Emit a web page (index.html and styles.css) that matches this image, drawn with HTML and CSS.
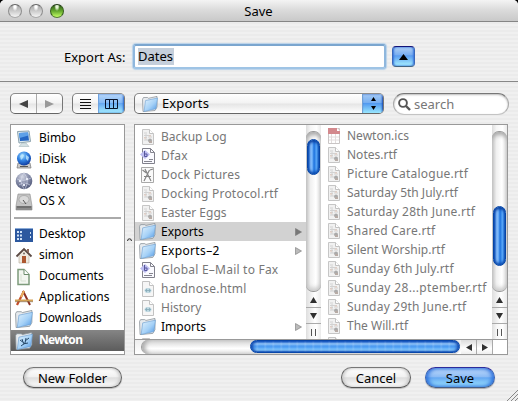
FILE: index.html
```html
<!DOCTYPE html>
<html lang="en">
<head>
<meta charset="utf-8">
<title>Save</title>
<link rel="stylesheet" href="styles.css">
</head>
<body>
<svg width="0" height="0" class="defs" aria-hidden="true">
  <defs>
    <linearGradient id="gBlue" x1="0" y1="0" x2="1" y2="1"><stop offset="0" stop-color="#e4f3fd"/><stop offset=".55" stop-color="#a5d1f7"/><stop offset="1" stop-color="#4d96e4"/></linearGradient>
    <radialGradient id="gGlobe" cx=".4" cy=".3" r=".75"><stop offset="0" stop-color="#9ddcff"/><stop offset=".5" stop-color="#2f7fe0"/><stop offset="1" stop-color="#0b3498"/></radialGradient>
    <radialGradient id="gNet" cx=".4" cy=".25" r=".8"><stop offset="0" stop-color="#d5d9e5"/><stop offset=".5" stop-color="#858ca8"/><stop offset="1" stop-color="#4c5475"/></radialGradient>
    <symbol id="folder" viewBox="0 0 16 16"><path d="M.5 3.2 1.500 1.500h4l1 .8L15 .4V11l-2 3.500L1 15.600z" fill="#e6eaee" stroke="#858d94" stroke-width=".7"/><path d="M3.500 4.600 15.500 2 14 12.800 2 15.500z" fill="url(#gBlue)" stroke="#6d9fd2" stroke-width=".6"/></symbol>
    <symbol id="rtf" viewBox="0 0 14 16"><path d="M1.5.5h7l4 4v11h-11z" fill="#f1f1f1" stroke="#c6c6c6"/><path d="M8.5.5v4h4" fill="#fff" stroke="#c2c2c2"/><path d="M3 4h3M3 6.5h7M3 8.5h3M5 5v6M3 11h4M7 8h4" stroke="#d2d2d2"/><path d="M3 9h2M8 7h2" stroke="#e5c9bb"/><circle cx="9" cy="11.5" r="2" fill="#aaa"/><path d="M8 12h3v2H8z" fill="#b7aba5"/></symbol>
    <symbol id="html" viewBox="0 0 14 16"><path d="M1.5.5h7l4 4v11h-11z" fill="#f6f6f6" stroke="#c2c2c2"/><path d="M8.5.5v4h4" fill="#fff" stroke="#c2c2c2"/><ellipse cx="7" cy="9.5" rx="3.5" ry="2.5" fill="#bdd8e1"/><path d="M4 9.5h6M5.5 7.8v3.4M8.5 7.8v3.4" stroke="#85a9b7" stroke-width=".8"/></symbol>
    <symbol id="bb" viewBox="0 0 16 16"><path d="M2.5.5h8l4 4v11h-12z" fill="#fafaff" stroke="#81818c"/><path d="M10.5.5v4h4M4 13.5h8M9 11.5h4" fill="none" stroke="#85858f"/><path d="M0 6.5 5 2l5 4.5L5 11z" fill="#bdbdf0"/><path d="M4.500 3v5.500h2.500V6H4.500" fill="none" stroke="#57579d"/></symbol>
    <symbol id="dock" viewBox="0 0 16 16"><path d="M1.5.5h12v15h-12z" fill="#fafafa" stroke="#a9a9a9"/><path d="M5 2l6 12M9.500 3 4 14M2.5 3l4 3M4 9.500h7M10 3l3-1" stroke="#858585" stroke-width="1.2"/></symbol>
    <symbol id="ics" viewBox="0 0 14 16"><path d="M1.5.5h11v15h-11z" fill="#fff" stroke="#c9c5c5"/><path d="M1 0h9l3 3v3H1z" fill="#d3898d"/><path d="M10 0v3h3" fill="#fff"/><path d="M2 9h10M2 12h10M4.5 6v9M8.5 6v9" stroke="#e2dcdc"/></symbol>
    <symbol id="arrow" viewBox="0 0 7 8"><path d="M.5.5 6.5 4 .5 7.5z" fill="currentColor" stroke="#777" stroke-width=".6"/></symbol>
    <symbol id="up" viewBox="0 0 7 6"><path d="M3.5 0 7 6H0z" fill="#303030"/></symbol>
    <symbol id="down" viewBox="0 0 7 6"><path d="M0 0h7L3.5 6z" fill="#303030"/></symbol>
  </defs>
</svg>
<div class="window">
  <header class="titlebar">
    <div class="lights"><i></i><i></i><i class="green"></i></div>
    <h1>Save</h1>
  </header>
  <section class="export">
    <label>Export As:</label>
    <div class="field"><span>Dates</span></div>
    <button class="disclose"><svg width="9" height="6" viewBox="0 0 9 6"><path d="M4.5 0 9 6H0z"/></svg></button>
  </section>
  <section class="toolbar">
    <div class="segment nav">
      <span><svg width="9" height="8" viewBox="0 0 9 8"><path d="M0 4 9 0v8z" fill="#444"/></svg></span>
      <span><svg width="9" height="8" viewBox="0 0 9 8"><path d="M9 4 0 0v8z" fill="#999"/></svg></span>
    </div>
    <div class="segment view">
      <span><svg width="11" height="10" viewBox="0 0 11 10"><path d="M0 .5h11M0 3.5h11M0 6.5h11M0 9.5h11" stroke="#111"/></svg></span>
      <span class="on"><svg width="13" height="10" viewBox="0 0 13 10"><path d="M.5.5h12v9H.5zM4.5 0v10M8.5 0v10" fill="none" stroke="#07132c"/></svg></span>
    </div>
    <div class="popup">
      <svg class="ico" width="16" height="16"><use href="#folder"/></svg><b>Exports</b>
      <span class="stepper"><svg width="5" height="13" viewBox="0 0 5 13"><path d="M2.5 0 5 4H0zM2.5 13 0 9h5z"/></svg></span>
    </div>
    <div class="search"><svg width="13" height="13" viewBox="0 0 13 13"><circle cx="5" cy="5" r="3.9" fill="none" stroke="#555" stroke-width="1.9"/><path d="m8 8 4 4" stroke="#555" stroke-width="2.4"/></svg><span>search</span></div>
  </section>
  <main class="panes">
    <nav class="sidebar">
      <div class="place"><svg viewBox="0 0 18 18"><path d="M2.5 1.5 14 1l1.5 10.5L4 13z" fill="#ddeaf0" stroke="#8ba2ad"/><path d="M4 3l9-.5 1 8L5 11z" fill="#2467c4"/><path d="M4 3l9-.5.5 3L4.500 8z" fill="#5ca0e8"/><path d="M7 13h4l3 3.500H4z" fill="#d4e1e4" stroke="#a7b9be" stroke-width=".6"/></svg><span>Bimbo</span></div>
      <div class="place"><svg viewBox="0 0 18 18"><path d="M3 12h12l1 5H2z" fill="#c9c9c9" stroke="#777" stroke-width=".7"/><circle cx="9" cy="7.500" r="7" fill="url(#gGlobe)"/><path d="M5 5l2-2 2 1-1 3-2 2zM11 4l3 2-1 4-2-2z" fill="#c6ecff" opacity=".75"/><path d="M5 15.500h8" stroke="#555"/></svg><span>iDisk</span></div>
      <div class="place"><svg viewBox="0 0 18 18"><circle cx="9" cy="9" r="8.300" fill="url(#gNet)"/><path d="M2 7q7 3 14-1M4 13q5-4 11 0M9 1q-6 7 0 16M9 1q6 7 1 16" fill="none" stroke="#d7dcee" stroke-width=".6"/><path d="M4 8h2v2H4zM11 6h2v2h-2zM8 12h2v2H8z" fill="#e5e9f5"/></svg><span>Network</span></div>
      <div class="place"><svg viewBox="0 0 18 18"><path d="M3 1h12l2 12v4H1v-4z" fill="#c3c3c3" stroke="#898989" stroke-width=".6"/><ellipse cx="9" cy="6.500" rx="5" ry="4" fill="#d9d9d9" stroke="#999" stroke-width=".6"/><path d="M1 13h16v4H1z" fill="#8c8c8c"/><path d="M2 14h14M8 7l3 4" stroke="#555"/></svg><span>OS X</span></div>
      <hr>
      <div class="place"><svg viewBox="0 0 18 18"><path d="M0 2h18v14H0z" fill="#2c589f"/><path d="M0 2h18v1H0z" fill="#8babd7"/><path d="M2 5h2v2H2zM5 5h2v2H5zM2 8.500h2v2H2zM5 8.500h2v2H5zM2 12h2v2H2zM5 12h2v2H5zM15 6h1v2h-1zM15 10h1v2h-1z" fill="#cee0f5"/></svg><span>Desktop</span></div>
      <div class="place"><svg viewBox="0 0 18 18"><path d="M4 8 9 3l5 5v8H4z" fill="#f0eadf" stroke="#b1a99b" stroke-width=".6"/><path d="M1.500 9.500 9 2l7.500 7.500" fill="none" stroke="#5c4a44" stroke-width="1.800"/><path d="M12 2h2v4l-2-2z" fill="#8f6c5d"/><path d="M7 9h4v7H7z" fill="#ad5730"/><circle cx="9" cy="6.500" r="1" fill="#756b64"/></svg><span>simon</span></div>
      <div class="place"><svg viewBox="0 0 18 18"><path d="M3 1.500h6l5 5v10H3z" fill="#f3f6f0" stroke="#7d9b7b" stroke-width="1.500"/><path d="M9 1.500v5h5" fill="#fff" stroke="#6d8c6c"/><path d="M6 6v7h5" stroke="#d8e2d4" fill="none"/></svg><span>Documents</span></div>
      <div class="place apps"><svg viewBox="0 0 18 18"><path d="m9 2-7 14" stroke="#c44c2b" stroke-width="2.200"/><path d="m8 2 7 14" stroke="#8c3022" stroke-width="2"/><path d="m9 2-3 6" stroke="#eab161" stroke-width="2"/><path d="M0 11.500h18" stroke="#d3a154" stroke-width="2"/><path d="M0 12.700h18" stroke="#77593a" stroke-width=".6"/></svg><span>Applications</span></div>
      <div class="place"><svg><use href="#folder"/></svg><span>Downloads</span></div>
      <div class="place selected"><svg viewBox="0 0 18 18"><use href="#folder"/><path d="m6 14 4-3 1-5M9 11 5 8M10 9l4-3M8 12l5-1M7 7l1 3" fill="none" stroke="#274a6b"/></svg><span>Newton</span></div>
    </nav>
    <div class="splitter"><svg width="5" height="4" viewBox="0 0 5 4"><path d="M.5 3q0-2.200 2-2.200T4.500 3" fill="#ddd" stroke="#333"/></svg></div>
    <div class="browser">
      <div class="columns">
        <ul class="list first">
          <li><svg><use href="#rtf"/></svg><span>Backup Log</span></li>
          <li><svg><use href="#bb"/></svg><span class="open">Dfax</span></li>
          <li><svg><use href="#dock"/></svg><span class="open">Dock Pictures</span></li>
          <li><svg><use href="#rtf"/></svg><span class="open">Docking Protocol.rtf</span></li>
          <li><svg><use href="#rtf"/></svg><span>Easter Eggs</span></li>
          <li class="dir current"><svg><use href="#folder"/></svg><span>Exports</span><svg class="chev"><use href="#arrow"/></svg></li>
          <li class="dir"><svg><use href="#folder"/></svg><span class="wide">Exports–2</span><svg class="chev"><use href="#arrow"/></svg></li>
          <li><svg><use href="#bb"/></svg><span class="open">Global E–Mail to Fax</span></li>
          <li><svg><use href="#html"/></svg><span class="open">hardnose.html</span></li>
          <li><svg><use href="#html"/></svg><span>History</span></li>
          <li class="dir"><svg><use href="#folder"/></svg><span>Imports</span><svg class="chev"><use href="#arrow"/></svg></li>
          <li><svg><use href="#html"/></svg></li>
        </ul>
        <div class="vscroll one"><div class="track"><div class="thumb"></div></div><div class="btn"><svg><use href="#up"/></svg></div><div class="btn"><svg><use href="#down"/></svg></div><div class="grip"></div></div>
        <ul class="list second">
          <li><svg><use href="#ics"/></svg><span>Newton.ics</span></li>
          <li><svg><use href="#rtf"/></svg><span>Notes.rtf</span></li>
          <li><svg><use href="#rtf"/></svg><span class="open">Picture Catalogue.rtf</span></li>
          <li><svg><use href="#rtf"/></svg><span>Saturday 5th July.rtf</span></li>
          <li><svg><use href="#rtf"/></svg><span class="open">Saturday 28th June.rtf</span></li>
          <li><svg><use href="#rtf"/></svg><span class="open">Shared Care.rtf</span></li>
          <li><svg><use href="#rtf"/></svg><span>Silent Worship.rtf</span></li>
          <li><svg><use href="#rtf"/></svg><span class="open">Sunday 6th July.rtf</span></li>
          <li><svg><use href="#rtf"/></svg><span class="wide">Sunday 28...ptember.rtf</span></li>
          <li><svg><use href="#rtf"/></svg><span class="open">Sunday 29th June.rtf</span></li>
          <li><svg><use href="#rtf"/></svg><span>The Will.rtf</span></li>
          <li><svg><use href="#rtf"/></svg></li>
        </ul>
        <div class="vscroll two"><div class="track"><div class="thumb"></div></div><div class="btn"><svg><use href="#up"/></svg></div><div class="btn"><svg><use href="#down"/></svg></div><div class="grip"></div></div>
      </div>
      <div class="hscroll"><div class="htrack"><div class="hthumb"></div></div><div class="hbtn"><svg width="6" height="7" viewBox="0 0 6 7"><path d="M0 3.500 6 0v7z"/></svg></div><div class="hbtn"><svg width="6" height="7" viewBox="0 0 6 7"><path d="M6 3.500 0 0v7z"/></svg></div><div class="corner"></div></div>
    </div>
  </main>
  <footer class="actions">
    <button class="pill new">New Folder</button>
    <button class="pill">Cancel</button>
    <button class="pill default">Save</button>
  </footer>
  <svg class="resize" width="12" height="12" viewBox="0 0 12 12"><path d="M1 12 12 1M5 12l7-7M9 12l3-3" stroke="#888"/></svg>
</div>
</body>
</html>
```
FILE: styles.css
```css
* { box-sizing: border-box; }
body { margin: 0; background: #000; font: 12px/19px "Noto Sans", "Open Sans", sans-serif; color: #000; overflow: hidden; }
svg { display: block; flex: none; }
.defs { position: absolute; }
button { font: inherit; padding: 0; margin: 0; }
.window { position: relative; width: 518px; height: 401px; border-radius: 5px 5px 0 0; overflow: hidden; background: repeating-linear-gradient(#f0f0f0 0 2px, #ebebeb 2px 4px); }
.titlebar { height: 22px; border-bottom: 1px solid #858585; background: linear-gradient(#f4f4f4, #dcdcdc 45%, #c9c9c9); display: grid; grid-template-columns: 72px 1fr 73px; align-items: center; }
.titlebar h1 { margin: 0; text-align: center; font-size: 13px; font-weight: 400; line-height: 20px; padding-top: 1px; }
.lights { display: flex; gap: 7px; padding-left: 8px; }
.lights i { width: 14px; height: 14px; border-radius: 50%; border: 1px solid #777; border-color: #666 #8c8c8c #aaa; background: radial-gradient(ellipse at 50% 12%, #fff 0 12%, transparent 32%), linear-gradient(#a7a7a7, #c7c7c7 45%, #f5f5f5); }
.lights .green { border-color: #233c18 #345c1b #547c34; background: radial-gradient(ellipse at 50% 10%, #e6f5d6 0 13%, transparent 32%), linear-gradient(#315f19, #63a72d 50%, #c3ff65); }
.export { height: 60px; border-bottom: 1px solid #888; display: flex; align-items: flex-start; padding: 22px 0 0 64px; font-size: 13px; }
.export label { width: 69px; line-height: 26px; }
.field { width: 253px; height: 25px; border: 2px solid #8ab2d9; border-color: #7ba6cf #8fb7dd #9fc4e5; border-radius: 3px; background: #fff; box-shadow: 0 0 1px 1px #b8d2ea; padding: 2px 0 0 3px; }
.field span { display: block; width: 36px; height: 17px; line-height: 17px; background: #c5cfdb; }
.disclose { width: 23px; height: 21px; margin: 2px 0 0 6px; border: 1px solid #264cad; border-color: #141478 #3a68b9 #426481; border-radius: 4px; background: linear-gradient(#b1d1f4, #79aef0 42%, #5b9df0 46%, #a9f2ff); display: grid; place-items: center; box-shadow: inset 1px 0 2px #3976dc, inset -1px 0 2px #3976dc; }
.toolbar { height: 42px; display: flex; padding: 11px 0 0 10px; align-items: flex-start; }
.segment { display: flex; width: 53px; height: 21px; border: 1px solid #777; border-color: #8c8c8c #777 #666; border-radius: 5px; overflow: hidden; background: linear-gradient(#fff, #f3f3f3 48%, #e5e5e5 52%, #fff); }
.segment span { flex: 1; display: grid; place-items: center; }
.segment span + span { border-left: 1px solid #aaa; }
.view { margin-left: 9px; }
.segment .on { background: linear-gradient(#b9d8fa, #86baf5 45%, #68a9f2 50%, #a6efff); border-color: #6ea2e0; box-shadow: inset -1px 0 2px #2665cb; }
.popup { width: 250px; height: 21px; margin-left: 9px; border: 1px solid #777; border-color: #8c8c8c #777 #666; border-radius: 5px; overflow: hidden; background: linear-gradient(#fff, #f3f3f3 48%, #e5e5e5 52%, #fff); display: flex; align-items: center; padding-left: 7px; }
.popup b { font-size: 13px; font-weight: 400; margin-left: 4px; letter-spacing: .1px; }
.stepper { width: 21px; height: 21px; margin-left: auto; display: grid; place-items: center; background: linear-gradient(#a9cdf5, #79b0f1 45%, #529af0 50%, #a1efff); border-left: 1px solid #719fd3; box-shadow: inset -1px 1px 2px #1849ae; }
.search { width: 116px; height: 22px; margin-left: 9px; border-radius: 11px; border: 1px solid #aaa; border-color: #777 #aaa #c4c4c4; background: #fff; box-shadow: inset 0 1px 2px #bbb; display: flex; align-items: center; padding-left: 4px; gap: 3px; color: #777; font-size: 13px; }
.panes { height: 231px; padding-left: 10px; display: flex; }
.sidebar { width: 115px; height: 231px; border: 1px solid #999; background: #fff; padding-top: 3px; }
.place { height: 21px; display: flex; align-items: center; padding-left: 4px; gap: 6px; }
.place svg { width: 18px; height: 18px; }
.place span { position: relative; top: -1px; }
.apps { letter-spacing: .15px; }
.sidebar hr { border: 0; height: 2px; background: #aaa; margin: 5px 3px 5px; }
.selected { color: #fff; font-weight: 700; letter-spacing: -.7px; background: linear-gradient(#858585, #5c5c5c); margin-top: 1px; }
.splitter { width: 9px; display: grid; place-items: center; }
.browser { width: 374px; height: 231px; border: 1px solid #999; background: #fff; }
.columns { height: 214px; display: flex; }
.list { width: 171px; height: 214px; margin: 0; padding: 2px 0 0; list-style: none; overflow: hidden; color: #777; }
.list.second { padding-top: 1px; }
.list li { height: 19px; display: flex; align-items: center; padding-left: 5px; }
.list li > svg { width: 16px; height: 16px; }
.list li > span { margin-left: 5px; white-space: nowrap; }
.list .open { letter-spacing: .22px; }
.list .wide { letter-spacing: .35px; }
.list .dir { color: #000; }
.list .dir > svg:first-child { width: 17px; height: 17px; margin-left: -1px; }
.list .current { background: #d2d2d2; }
.list li > .chev { width: 7px; height: 8px; margin: 0 4px 0 auto; color: #bbb; }
.list .current .chev { color: #777; }
.vscroll { width: 15px; height: 214px; padding-top: 6px; background: linear-gradient(90deg, #ddd, #f6f6f6 30%, #fff 70%, #eaeaea); }
.track { height: 161px; border: 1px solid #999; border-width: 1px 0; border-radius: 7px; background: linear-gradient(90deg, #ccc, #f0f0f0 30%, #fff 65%, #e4e4e4); box-shadow: inset 0 4px 4px -1px #aaa, inset 0 -3px 4px #ccc; padding-top: 7px; }
.thumb { width: 13px; margin-left: 1px; border-radius: 7px; border: 1px solid #0645a5; background: linear-gradient(90deg, #1664d4, #88bdf8 25%, #73b4fb 38%, #1c71dd 55%, #5eacfb 78%, #287de0); box-shadow: inset 0 2px 3px #073b9c, inset 0 -2px 3px #0c4cb0; }
.one .thumb { height: 36px; }
.two .thumb { height: 60px; margin-top: 67px; }
.btn { height: 16px; display: grid; place-items: center; border-bottom: 1px solid #aaa; background: linear-gradient(90deg, #dedede, #fff 60%, #eaeaea); }
.btn svg { width: 7px; height: 6px; }
.grip { width: 5px; height: 7px; margin: 5px 0 0 5px; border: 1px solid #555; border-width: 0 1px; }
.hscroll { height: 15px; display: flex; border-top: 1px solid #999; background: linear-gradient(#eee, #fff); }
.htrack { width: 320px; height: 14px; margin-left: 6px; border: 1px solid #999; border-width: 0 0 0 1px; border-radius: 8px; background: linear-gradient(#d2d2d2, #fff 60%, #e2e2e2); box-shadow: inset 4px 0 4px -1px #aaa; padding-left: 108px; }
.hthumb { width: 210px; height: 13px; border: 1px solid #0846a9; border-radius: 7px; background: repeating-linear-gradient(90deg, transparent 0 5px, #ffffff25 6px, transparent 8px), linear-gradient(#1b65d2, #92c5f8 25%, #4e9bf1 45%, #4c9df4 55%, #8ed0ff 85%, #337bd5); box-shadow: inset 2px 0 3px #0d46ae, inset -2px 0 3px #0d46ae; }
.hbtn { width: 16px; height: 14px; border-right: 1px solid #aaa; display: grid; place-items: center; background: linear-gradient(#ddd, #fff 60%, #eee); }
.hbtn svg { fill: #303030; }
.corner { flex: 1; background: #fff; }
.actions { display: flex; padding: 12px 23px 0; font-size: 13px; }
.pill { width: 70px; height: 21px; line-height: 18px; border: 1px solid #666; border-color: #777 #606060 #555; border-radius: 11px; color: #000; background: linear-gradient(#fff, #f1f1f1 45%, #dedede 52%, #fff); box-shadow: 0 1px 1px #bbb, inset 2px 0 3px #ccc, inset -2px 0 3px #ccc; }
.pill.new { width: 99px; margin-right: auto; }
.pill.default { margin-left: 14px; border-color: #2c2c9c #3562b5 #475d84; background: linear-gradient(#c4ddfa, #8dbcf5 45%, #65a8f2 52%, #a7edff); box-shadow: 0 1px 1px #aaa, inset 2px 0 4px #2c70dc, inset -2px 0 4px #2c70dc; }
.resize { position: absolute; right: 0; bottom: 0; }
```
